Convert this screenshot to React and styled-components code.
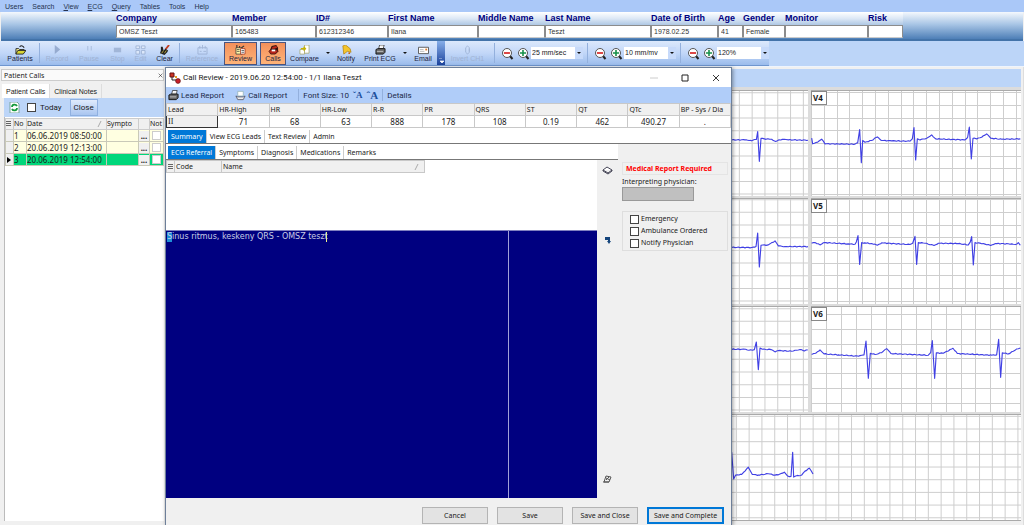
import styled, { createGlobalStyle } from 'styled-components';

const tahoma = '"Noto Sans", "Open Sans", sans-serif';
const segoe = 'Roboto, "Noto Sans", sans-serif';
const msSans = '"Liberation Sans", Arial, sans-serif';

const colors = {
  menu: '#aac8f8',
  strip: '#bcd5f8',
  navy: '#000080',
  face: '#f0f0f0',
  line: '#c8c8c8',
  highlight: '#0078d7',
  row: '#ffffe1',
  rowActive: '#00d77b',
};

const GlobalStyle = createGlobalStyle`
  * {
    box-sizing: border-box;
  }

  body {
    margin: 0;
    overflow: hidden;
    background: ${colors.face};
    font-family: ${tahoma};
    font-size: 8px;
    color: #1a1a1a;
  }

  button, input, select, textarea {
    font: inherit;
    color: inherit;
    margin: 0;
    padding: 0;
    border-radius: 0;
  }
`;

const Screen = styled.div`
  position: relative;
  display: flex;
  flex-direction: column;
  min-height: 100vh;
`;

/* Menu bar */

const MenuBar = styled.nav`
  display: flex;
  gap: 9px;
  height: 12px;
  padding: 0 5px;
  background: ${colors.menu};
  font-family: ${msSans};
  font-size: 7px;
  line-height: 13px;

  a {
    color: #26334f;
    text-decoration: none;
  }
`;

/* Patient header */

const PatientHeader = styled.section`
  display: grid;
  grid-template-columns: ${({ $columns }) => $columns};
  height: 29px;
  margin: 0 1px;
  border-bottom: 2px solid #4373a9;
  background: linear-gradient(#fff, #dbe7f5 25%, #7ba3d0 75%, #5384bb);
  font-family: ${msSans};
`;

const HeaderFill = styled.div`
  background: linear-gradient(#f4f8fd, #a9c6e6 45%, #4e7fb7);
`;

const PatientField = styled.label`
  display: flex;
  flex-direction: column;
  min-width: 0;
  color: ${colors.navy};
  font-size: 9px;
  font-weight: bold;
  line-height: 13px;
  white-space: nowrap;

  input {
    width: 100%;
    height: 13px;
    padding: 0 2px 1px;
    border: 1px solid #8c8c8c;
    border-bottom-color: #ccc;
    background: #fff;
    color: #333;
    font-size: 7px;
    font-weight: normal;
  }
`;

/* Main toolbar */

const ToolbarRow = styled.div`
  display: flex;
  height: 26px;
  border-bottom: 1px solid #eef4fd;
  background: ${colors.strip};
  font-family: ${msSans};
  font-size: 7px;
`;

const Toolbar = styled.div`
  display: flex;
  align-items: center;
  padding-left: ${({ $pad }) => $pad || 0}px;
  background: linear-gradient(#dce9fc, #c2d7f8 50%, #9bbcec);
  border-bottom: 1px solid #6f96cf;
`;

const ToolButton = styled.button`
  display: flex;
  flex-direction: column;
  align-items: center;
  justify-content: space-between;
  flex: none;
  width: ${({ $w }) => $w}px;
  height: 23px;
  padding: 2px 0 1px;
  border: 1px solid ${({ $on }) => ($on ? '#4b5580' : 'transparent')};
  background: ${({ $on }) => ($on ? 'linear-gradient(#f3905a, #ffb479)' : 'none')};
  color: ${({ disabled }) => (disabled ? '#9fb2d3' : '#1c2440')};
  line-height: 8px;
  white-space: nowrap;

  svg {
    width: 11px;
    height: 10px;
    opacity: ${({ disabled }) => (disabled ? 0.7 : 1)};
  }
`;

const Separator = styled.span`
  flex: none;
  width: 1px;
  height: ${({ $h }) => $h || 20}px;
  margin: 0 ${({ $gap }) => $gap || 0}px;
  background: #93b0dd;
`;

const ButtonGap = styled.span`
  width: 3px;
`;

const DropArrow = styled.button`
  width: 9px;
  border: 0;
  background: none;

  &::after {
    content: '';
    display: block;
    width: 0;
    margin: 0 auto;
    border: 2px solid transparent;
    border-top-color: #111;
    border-bottom: 0;
  }
`;

const OverflowHandle = styled.button`
  display: flex;
  align-items: flex-end;
  justify-content: center;
  width: 8px;
  height: 100%;
  padding-bottom: 2px;
  border: 0;
  background: linear-gradient(#86aee9, #1c439c);

  svg {
    width: 5px;
    height: 5px;
  }
`;

const ScaleGroup = styled.div`
  display: flex;
  align-items: center;
`;

const ZoomButton = styled.button`
  width: 16px;
  height: 14px;
  border: 0;
  background: none;

  svg {
    display: block;
    width: 13px;
    height: 13px;
    margin: auto;
  }
`;

const ScaleSelect = styled.span`
  display: flex;
  align-items: center;
  width: 52px;
  height: 12px;
  background: linear-gradient(90deg, #fff 44px, #c7dafa 44px);

  select {
    appearance: none;
    width: 43px;
    height: 12px;
    padding-left: 1px;
    border: 0;
    background: none;
    line-height: 12px;
  }
`;

/* Workspace */

const Workspace = styled.main`
  display: flex;
  flex: 1;
`;

const CallsPanel = styled.aside`
  display: flex;
  flex-direction: column;
  flex: none;
  width: 165px;
  padding: 2px 1px 4px;
  background: ${colors.face};
`;

const PanelTitle = styled.header`
  display: flex;
  align-items: center;
  justify-content: space-between;
  height: 12px;
  padding: 0 0 0 2px;
  border: 1px solid #ccc;
  background: #fafafa;
  font-size: 7px;

  button {
    border: 0;
    background: none;
  }

  svg {
    display: block;
    width: 5px;
    height: 5px;
  }
`;

const PanelTabs = styled.div`
  display: flex;
  height: 17px;
  padding: 3px 0 0 1px;
  font-family: ${msSans};
  font-size: 7px;
`;

const PanelTab = styled.button`
  padding: 0 4px;
  border: 0;
  border-right: 1px solid #ddd;
  background: ${({ $on }) => ($on ? '#fff' : 'none')};
`;

const PanelTools = styled.div`
  display: flex;
  align-items: center;
  height: 19px;
  margin-left: 3px;
  padding-left: 5px;
  background: ${colors.strip};
  font-family: ${segoe};

  & > svg {
    width: 11px;
    height: 11px;
    margin-right: 7px;
  }
`;

const CheckLabel = styled.label`
  display: flex;
  align-items: center;
  gap: ${({ $gap }) => $gap || 2}px;

  input {
    appearance: none;
    width: 9px;
    height: 9px;
    border: 1px solid #444;
    background: #fff;
  }
`;

const CloseCalls = styled.button`
  height: 17px;
  margin-left: 8px;
  padding: 0 3px;
  border: 1px solid #8fb0e0;
  background: linear-gradient(#e0ebfc, #a9c5f0);
`;

const CallsBody = styled.div`
  flex: 1;
  margin-left: 3px;
  padding-top: 1px;
  border-left: 1px solid #bbb;
  background: #fff;
  overflow: hidden;
`;

const CallsTable = styled.table`
  width: 100%;
  table-layout: fixed;
  border-collapse: collapse;
  line-height: 10px;

  th, td {
    height: 12px;
    padding: 0;
    border: 1px solid #c9c9b8;
    font-weight: normal;
    text-align: left;
    white-space: nowrap;
    overflow: hidden;
  }

  th {
    height: 11px;
    background: ${colors.face};
    border-color: #ccc;
    font-size: 7px;
  }

  th svg {
    display: block;
    width: 5px;
    height: 6px;
  }
`;

const SortHeader = styled.div`
  display: flex;
  align-items: center;
  justify-content: space-between;
  padding-right: 4px;
`;

const CallRow = styled.tr`
  background: ${({ $on }) => ($on ? colors.rowActive : colors.row)};

  td:first-child {
    background: ${colors.face};
  }

  svg {
    display: block;
    width: 4px;
    height: 6px;
    margin-left: 1px;
  }

  button {
    display: block;
    width: 10px;
    height: 10px;
    border: 0;
    background: ${colors.face};
    font-size: 8px;
    font-weight: bold;
    line-height: 5px;
  }

  input {
    appearance: none;
    display: block;
    width: 9px;
    height: 9px;
    margin-left: 2px;
    border: 1px solid #ccc;
    background: #fff;
  }
`;

/* ECG leads */

const EcgArea = styled.section`
  display: flex;
  flex-direction: column;
  flex: 1;
  padding: 2px 2px 4px 0;
  border-right: 1px solid #ddd;
`;

const EcgStrip = styled.div`
  height: 18px;
  background: ${colors.strip};
`;

const LeadGrid = styled.div`
  display: grid;
  flex: 1;
  grid-template-columns: minmax(0, 49fr) minmax(0, 16fr);
  grid-template-rows: repeat(4, minmax(0, 1fr));
  gap: 2px 3px;
  padding-top: 3px;
  border-bottom: 1px solid #aaa;
  background: #dcdcdc;
`;

const LeadCell = styled.figure`
  position: relative;
  grid-column: ${({ $wide }) => ($wide ? '1 / -1' : 'auto')};
  margin: 0;
  border-top: 1px solid #aaa;
  background: #fff;

  svg {
    position: absolute;
    inset: 0;
    width: 100%;
    height: 100%;
  }

  figcaption {
    position: absolute;
    top: 0;
    left: 0;
    width: 16px;
    height: 14px;
    padding-left: 1px;
    border: 1px solid #888;
    background: #fff;
    font-size: 8px;
    font-weight: bold;
    line-height: 12px;
  }
`;

/* Call review dialog */

const Dialog = styled.section`
  position: absolute;
  top: 67px;
  bottom: 0;
  left: 165px;
  display: flex;
  flex-direction: column;
  width: 567px;
  border: 1px solid #6d7f99;
  border-bottom: 0;
  background: ${colors.face};
  box-shadow: 1px 1px 4px rgba(0, 0, 0, 0.4);
`;

const TitleBar = styled.header`
  display: flex;
  align-items: center;
  height: 19px;
  padding: 0 11px 0 3px;
  background: #fff;
  font-family: ${segoe};

  & > svg {
    width: 12px;
    height: 12px;
  }

  h1 {
    flex: 1;
    margin: 0 0 0 2px;
    font-size: 8px;
    font-weight: normal;
  }
`;

const WindowButton = styled.button`
  margin-left: 23px;
  border: 0;
  background: none;

  svg {
    display: block;
    width: 8px;
    height: 8px;
  }
`;

const DialogTools = styled.div`
  display: flex;
  align-items: center;
  height: 16px;
  padding-left: 2px;
  background: #b0cdf9;
  color: #1c2a4a;
  font-family: ${segoe};
`;

const DialogTool = styled.button`
  display: flex;
  align-items: center;
  gap: 2px;
  margin-right: 11px;
  border: 0;
  background: none;

  svg {
    width: 11px;
    height: 11px;
  }
`;

const FontTools = styled.span`
  display: flex;
  align-items: center;
  gap: 4px;
  padding: 0 4px;
`;

const FontStep = styled.button`
  border: 0;
  background: none;
  color: #1d4f9c;
  font-family: "Liberation Serif", serif;
  font-size: ${({ $size }) => $size}px;
  font-weight: bold;
  line-height: 12px;
`;

const Measurements = styled.table`
  width: 100%;
  table-layout: fixed;
  border-collapse: collapse;
  background: #fff;
  line-height: 10px;

  th, td {
    height: 12px;
    padding: 0 1px;
    border: 1px solid ${colors.line};
    font-weight: normal;
    white-space: nowrap;
    overflow: hidden;
  }

  th {
    background: ${colors.face};
    font-size: 7px;
    text-align: left;
  }

  td {
    text-align: center;
  }

  td:first-child {
    border: 1px solid #333;
    background: ${colors.face};
    font-family: "Liberation Serif", serif;
    text-align: left;
  }
`;

const TabStrip = styled.div`
  display: flex;
  align-items: flex-end;
  height: 16px;
  margin-right: ${({ $right }) => $right || 0}px;
  padding-left: 2px;
  border-bottom: 1px solid #777;
  background: #fff;
`;

const Tab = styled.button`
  height: 13px;
  padding: 0 3px;
  border: 0;
  border-right: 1px solid ${({ $last }) => ($last ? 'transparent' : '#ccc')};
  background: ${({ $on }) => ($on ? colors.highlight : '#fff')};
  color: ${({ $on }) => ($on ? '#fff' : '#1a1a1a')};
  font-size: 7px;
`;

const DialogBody = styled.div`
  display: flex;
  flex: 1;
`;

const EditorColumn = styled.div`
  display: flex;
  flex-direction: column;
  flex: 1;
  background: #fff;
`;

const CodeTable = styled.table`
  width: 259px;
  height: 13px;
  margin-bottom: 57px;
  table-layout: fixed;
  border-collapse: collapse;
  background: ${colors.face};
  font-size: 7px;
  line-height: 10px;

  th {
    padding: 0 1px;
    border: 1px solid ${colors.line};
    font-weight: normal;
    text-align: left;
  }

  th svg {
    display: block;
    width: 5px;
    height: 6px;
  }
`;

const ReportText = styled.textarea`
  display: block;
  flex: 1;
  width: 100%;
  padding: 0 1px;
  border: 0;
  border-top: 1px solid #8080c0;
  outline: 0;
  resize: none;
  background:
    linear-gradient(#f4f48a, #f4f48a) 160px 1px / 1px 10px no-repeat,
    linear-gradient(#1e90d8, #1e90d8) 1px 1px / 5px 10px no-repeat,
    linear-gradient(#a0a0d8, #a0a0d8) right 88px top / 1px 100% no-repeat,
    ${colors.navy};
  color: #c8cce4;
  font-family: "DejaVu Sans", sans-serif;
  line-height: 12px;
`;

const IconColumn = styled.div`
  display: flex;
  flex-direction: column;
  width: 21px;
  padding: 5px 0 14px 5px;

  button {
    width: 11px;
    height: 10px;
    border: 0;
    background: none;
  }

  button:nth-child(2) {
    margin: 60px 0 auto;
  }

  svg {
    display: block;
    width: 11px;
    height: 10px;
  }
`;

const StatusColumn = styled.div`
  display: flex;
  flex-direction: column;
  width: 113px;
  padding: 2px 3px 0 4px;
  font-size: 7px;
`;

const Required = styled.p`
  margin: 0;
  padding-left: 3px;
  border: 1px solid #e4e4e4;
  color: #f00;
  font-weight: bold;
  line-height: 11px;
`;

const Physician = styled.label`
  display: flex;
  flex-direction: column;
  margin-top: 1px;
  line-height: 11px;

  input {
    width: 72px;
    height: 14px;
    border: 1px solid #999;
    background: #c0c0c0;
  }
`;

const Flags = styled.fieldset`
  display: flex;
  flex-direction: column;
  margin: 10px 0 0;
  padding: 1px 7px;
  border: 1px solid #dedede;
  line-height: 12px;
`;

const DialogFooter = styled.footer`
  display: flex;
  justify-content: flex-end;
  gap: 9px;
  height: 27px;
  padding: 9px 7px 0 0;
`;

const FooterButton = styled.button`
  width: ${({ $primary }) => ($primary ? 77 : 66)}px;
  height: 17px;
  border: ${({ $primary }) => ($primary ? `2px solid ${colors.highlight}` : '1px solid #b4b4b4')};
  background: #e3e3e3;
  font-size: 7px;
`;

/* Icons */

const FolderIcon = () => (
  <svg viewBox="0 0 12 11">
    <path d="M1 10V4h3l1 1h5v2" fill="#fff9a0" stroke="#222" />
    <path d="M1 10l2-4h9l-3 4z" fill="#d8d434" stroke="#222" />
    <path d="M5 2c2-2 4-1 5 1" fill="none" stroke="#222" strokeWidth="1.2" />
  </svg>
);
const PlayIcon = () => (
  <svg viewBox="0 0 12 11"><path d="M3 0l6 5-6 5z" fill="#8298c0" /></svg>
);
const PauseIcon = () => (
  <svg viewBox="0 0 12 11"><path d="M4 1v5M8 1v5" stroke="#a9bddd" strokeWidth="1.5" /></svg>
);
const StopIcon = () => (
  <svg viewBox="0 0 12 11"><path d="M2 3h8v5H2z" fill="#93a8cb" /></svg>
);
const GridIcon = () => (
  <svg viewBox="0 0 12 11">
    <path d="M1 1h4v3H1zM7 1h4v3H7zM1 6h4v4H1zM7 6h4v4H7z" fill="#e5eefb" stroke="#8fa4c8" />
  </svg>
);
const BrushIcon = () => (
  <svg viewBox="0 0 12 11">
    <path d="M11 0L7 5" stroke="#c33b1e" strokeWidth="2" />
    <path d="M2 2v4l-1 3 5 2 3-3 1-2-3-2-2 2-1-4z" fill="#222" />
    <path d="M3 9l2-3M6 9l2-3" stroke="#e7c93c" strokeWidth=".8" />
  </svg>
);
const ReferenceIcon = () => (
  <svg viewBox="0 0 12 11" fill="none" stroke="#8fa4c8">
    <path d="M1 3h10v7H1zM3 1v3M6 0v4M9 1v3M3 7h2M7 7h3" />
  </svg>
);
const ReviewIcon = () => (
  <svg viewBox="0 0 12 11">
    <path d="M1 3h7v7H1z" fill="#fff6a8" stroke="#333" strokeWidth=".8" />
    <path d="M2 3V0M5 3V1M7 3l3-2" stroke="#333" strokeWidth="1.2" />
    <path d="M6 4h5v6H6z" fill="#fff" stroke="#a02a12" strokeWidth=".8" />
    <path d="M2 5h3M2 7h3M7 6h3M7 8h3" stroke="#333" strokeWidth=".8" />
  </svg>
);
const PhoneIcon = () => (
  <svg viewBox="0 0 12 11">
    <path d="M2 6l2-5 5-1 2 3v4l-3 3H3z" fill="#30100c" />
    <path d="M4 4l1-2 4-1 1 2-3 1z" fill="#c02a1c" />
    <path d="M1 7l2-2 5 1 2-1 1 2-3 3H3z" fill="#b8241a" stroke="#30100c" strokeWidth=".8" />
    <path d="M4 5h4v2H4z" fill="#fff" />
  </svg>
);
const CompareIcon = () => (
  <svg viewBox="0 0 12 11">
    <path d="M6 0h5v9H6z" fill="#fff" stroke="#9a9a50" strokeWidth=".7" />
    <path d="M1 5h5v5H1z" fill="#fff" stroke="#9a9a50" strokeWidth=".7" />
    <path d="M2 4h5M5 2l2 2-2 2" fill="none" stroke="#c8b400" strokeWidth="1.5" />
  </svg>
);
const BellIcon = () => (
  <svg viewBox="0 0 12 11">
    <path d="M2 1l3-1 5 4 1 4-4-1-4 3z" fill="#f5c52b" stroke="#b38208" strokeWidth=".8" />
    <circle cx="9" cy="9" r="1" fill="#c45f10" />
  </svg>
);
const PrinterIcon = () => (
  <svg viewBox="0 0 12 11">
    <path d="M4 4l1-4h5L9 4z" fill="#fff" stroke="#222" strokeWidth=".8" />
    <path d="M1 5l2-1h8v4l-2 2H1z" fill="#666" stroke="#111" />
    <path d="M2 7h7M6 2h3" stroke="#ddd" strokeWidth=".8" />
  </svg>
);
const TrayIcon = () => (
  <svg viewBox="0 0 12 11">
    <path d="M3 1h6v5H3z" fill="#fff" stroke="#8aa" strokeWidth=".7" />
    <path d="M1 6l2 4h6l2-4-2 1H3z" fill="#eee" stroke="#445" strokeWidth=".8" />
  </svg>
);
const MailIcon = () => (
  <svg viewBox="0 0 12 11">
    <path d="M.5 2.5h11v7H.5z" fill="#fff" stroke="#555" />
    <path d="M2 5h4M2 7h5" stroke="#999" strokeWidth=".7" />
    <path d="M8 4h2v2H8z" fill="#e07b2a" />
  </svg>
);
const InvertIcon = () => (
  <svg viewBox="0 0 12 11" fill="none" stroke="#8fa4c8">
    <path d="M4 3l2-2 2 2v5l-2 2-2-2zM8 4v3" />
  </svg>
);
const LensIcon = ({ plus }) => (
  <svg viewBox="0 0 13 13">
    <path d="M8.5 8.5l3 3.5" stroke="#222" strokeWidth="2" />
    <circle cx="6" cy="6" r="4.5" fill="#fff" stroke="#555" />
    <path d={plus ? 'M3 6h6M6 3v6' : 'M3 6h6'} stroke={plus ? '#17904a' : '#d41a1a'} strokeWidth="1.6" />
  </svg>
);
const SortIcon = () => (
  <svg viewBox="0 0 5 6"><path d="M1 6l3-6" stroke="#999" strokeWidth=".8" /></svg>
);
const RowsIcon = () => (
  <svg viewBox="0 0 5 6"><path d="M0 .5h5M0 2.5h5M0 4.5h5" stroke="#555" strokeWidth=".9" /></svg>
);
const CrossIcon = () => (
  <svg viewBox="0 0 8 8"><path d="M1 1l6 6M7 1L1 7" stroke="#222" strokeWidth=".9" /></svg>
);

/* ECG traces, drawn at three units to the pixel */

const leads = [
  {
    box: [-1680, 15, 1929, 318],
    grid: [43, 20, 38.4],
    points: [[-20, 163], [60, 163], [72, 165], [80, 166], [88, 162], [94, 162], [98, 138], [103, 228], [108, 158],
      [118, 160], [140, 161], [152, 168], [162, 163], [178, 161], [190, 163], [250, 164]],
  },
  {
    label: 'V4',
    box: [258, 15, 630, 318],
    grid: [298, 20, 38.4],
    points: [[260, 158], [263, 175], [278, 170], [290, 161], [300, 175], [390, 176], [398, 172], [404, 132],
      [409, 232], [413, 165], [420, 170], [440, 165], [457, 154], [470, 165], [500, 166], [555, 167], [562, 160],
      [567, 126], [572, 224], [577, 160], [585, 163], [605, 158], [620, 148], [632, 160], [720, 163], [728, 155],
      [733, 124], [739, 221], [744, 158], [755, 160], [770, 155], [785, 145], [797, 158], [830, 161], [886, 160]],
  },
  {
    box: [-1680, 342, 1929, 318],
    grid: [43, 344, 38.4],
    points: [[-20, 488], [80, 489], [93, 486], [98, 445], [103, 548], [108, 482], [130, 481], [150, 469],
      [160, 484], [180, 486], [250, 486]],
  },
  {
    label: 'V5',
    box: [258, 342, 630, 318],
    grid: [298, 344, 38.4],
    points: [[260, 476], [270, 474], [285, 481], [298, 474], [370, 478], [390, 479], [394, 472], [399, 453],
      [404, 540], [410, 474], [418, 475], [440, 477], [457, 482], [470, 475], [555, 480], [563, 476], [570, 455],
      [575, 540], [580, 474], [600, 476], [627, 483], [640, 476], [700, 477], [730, 481], [736, 472], [740, 456],
      [745, 542], [750, 474], [775, 477], [797, 483], [810, 477], [860, 478], [872, 480], [880, 474], [886, 482]],
  },
  {
    box: [-1680, 18, 1929, 318],
    grid: [43, 23, 38.4],
    points: [[-20, 146], [62, 146], [72, 149], [88, 147], [94, 124], [100, 208], [105, 142], [112, 146],
      [138, 147], [150, 154], [160, 150], [200, 152], [215, 149], [228, 147], [238, 151], [248, 148]],
  },
  {
    label: 'V6',
    box: [258, 18, 630, 318],
    grid: [305, 41, 44.8],
    points: [[260, 162], [272, 158], [285, 148], [297, 160], [340, 163], [400, 167], [417, 163], [423, 121],
      [430, 234], [436, 158], [450, 162], [470, 156], [485, 144], [498, 159], [610, 164], [617, 156], [622, 120],
      [629, 234], [634, 157], [655, 158], [684, 143], [697, 159], [800, 164], [815, 163], [821, 116], [827, 231],
      [832, 157], [850, 160], [865, 152], [875, 145], [886, 142]],
  },
  {
    wide: true,
    box: [-1680, 342, 2568, 318],
    grid: [34, 346, 38.4],
    points: [[-20, 524], [10, 524], [20, 455], [26, 536], [32, 524], [50, 522], [60, 512], [70, 500], [82, 522],
      [100, 524], [130, 520], [150, 524], [165, 521], [178, 515], [188, 527], [198, 528], [203, 455], [206, 530],
      [212, 527], [230, 524], [240, 512], [253, 503], [264, 521]],
  },
];

// adds a little muscle noise to the slow parts of the trace
const tracePath = (points) => {
  const out = [];
  points.forEach(([x, y], i) => {
    out.push(`${x} ${y}`);
    const next = points[i + 1];
    if (!next || Math.abs(next[1] - y) > 18) return;
    for (let nx = x + 5; nx < next[0] - 2; nx += 5) {
      const mid = y + ((next[1] - y) * (nx - x)) / (next[0] - x);
      out.push(`${nx} ${(mid + Math.sin(nx * 1.7) * 1.2).toFixed(1)}`);
    }
  });
  return `M${out.join('L')}`;
};

const gridPath = ([left, top, width, height], [x0, y0, step]) => {
  let d = '';
  for (let x = x0 - Math.floor((x0 - left) / step) * step; x < left + width; x += step) d += `M${x} ${top}v${height}`;
  for (let y = y0 - Math.floor((y0 - top) / step) * step; y < top + height; y += step) d += `M${left} ${y}h${width}`;
  return d;
};

const Lead = ({ label, box, grid, points, wide }) => (
  <LeadCell $wide={wide}>
    <svg viewBox={box.join(' ')} preserveAspectRatio="none">
      <path d={gridPath(box, grid)} stroke="#cecece" strokeWidth="3" shapeRendering="crispEdges" />
      <path d={tracePath(points)} fill="none" stroke="#4040e4" strokeWidth="3.4" strokeLinejoin="round" />
    </svg>
    {label && <figcaption>{label}</figcaption>}
  </LeadCell>
);

/* Data */

const menus = [['U', 'sers'], ['S', 'earch'], ['V', 'iew'], ['E', 'CG'], ['Q', 'uery'], ['T', 'ables'], ['T', 'ools'], ['H', 'elp']];
const underlined = ['V', 'E', 'Q'];

const patient = [
  ['Company', 'OMSZ Teszt', 116],
  ['Member', '165483', 84],
  ['ID#', '612312346', 72],
  ['First Name', 'Ilana', 90],
  ['Middle Name', '', 67],
  ['Last Name', 'Teszt', 106],
  ['Date of Birth', '1978.02.25', 67],
  ['Age', '41', 25],
  ['Gender', 'Female', 42],
  ['Monitor', '', 83],
  ['Risk', '', 35],
];
const patientColumns = `115fr ${patient.map((f) => `minmax(0, ${f[2]}fr)`).join(' ')} 120fr`;

const scales = ['25 mm/sec', '10 mm/mv', '120%'];

const calls = [
  ['1', '06.06.2019 08:50:00'],
  ['2', '20.06.2019 12:13:00'],
  ['3', '20.06.2019 12:54:00'],
];

const measurements = [
  ['Lead', 'II'],
  ['HR-High', '71'],
  ['HR', '68'],
  ['HR-Low', '63'],
  ['R-R', '888'],
  ['PR', '178'],
  ['QRS', '108'],
  ['ST', '0.19'],
  ['QT', '462'],
  ['QTc', '490.27'],
  ['BP - Sys / Dia', '.'],
];

const MainToolbar = () => (
  <ToolbarRow>
    <Toolbar $pad={1}>
      <ToolButton $w={38}><FolderIcon />Patients</ToolButton>
      <Separator />
      <ToolButton $w={34} disabled><PlayIcon />Record</ToolButton>
      <ToolButton $w={30} disabled><PauseIcon />Pause</ToolButton>
      <ToolButton $w={27} disabled><StopIcon />Stop</ToolButton>
      <ToolButton $w={19} disabled><GridIcon />Edit</ToolButton>
      <ToolButton $w={29}><BrushIcon />Clear</ToolButton>
      <Separator />
      <ToolButton $w={44} disabled><ReferenceIcon />Reference</ToolButton>
      <ToolButton $w={33} $on><ReviewIcon />Review</ToolButton>
      <ButtonGap />
      <ToolButton $w={26} $on><PhoneIcon />Calls</ToolButton>
      <ToolButton $w={37}><CompareIcon />Compare</ToolButton>
      <DropArrow aria-label="Compare options" />
      <ToolButton $w={28}><BellIcon />Notify</ToolButton>
      <ToolButton $w={40}><PrinterIcon />Print ECG</ToolButton>
      <DropArrow aria-label="Print options" />
      <ToolButton $w={28}><MailIcon />Email</ToolButton>
      <OverflowHandle aria-label="More buttons">
        <svg viewBox="0 0 5 5"><path d="M0 0h3M1 3h4L3 5z" fill="#fff" stroke="#fff" strokeWidth=".7" /></svg>
      </OverflowHandle>
    </Toolbar>
    <Toolbar>
      <ToolButton $w={45} disabled><InvertIcon />Invert CH1</ToolButton>
      {scales.map((scale) => (
        <ScaleGroup key={scale}>
          <Separator $gap={4} />
          <ZoomButton aria-label="Zoom out"><LensIcon /></ZoomButton>
          <ZoomButton aria-label="Zoom in"><LensIcon plus /></ZoomButton>
          <ScaleSelect>
            <select aria-label="Scale" defaultValue={scale}>
              <option>{scale}</option>
            </select>
            <DropArrow as="span" />
          </ScaleSelect>
        </ScaleGroup>
      ))}
    </Toolbar>
  </ToolbarRow>
);

const PatientCalls = () => (
  <CallsPanel>
    <PanelTitle>
      Patient Calls
      <button aria-label="Close panel"><CrossIcon /></button>
    </PanelTitle>
    <PanelTabs>
      <PanelTab $on>Patient Calls</PanelTab>
      <PanelTab>Clinical Notes</PanelTab>
    </PanelTabs>
    <PanelTools>
      <svg viewBox="0 0 11 11">
        <path d="M1 0h7l2 2v9H1z" fill="#fff" stroke="#7ba6a0" />
        <path d="M3 5c0-3 4-3 5-1M8 6c0 3-4 3-5 1" fill="none" stroke="#159a3c" strokeWidth="1.8" />
      </svg>
      <CheckLabel $gap={4}><input type="checkbox" />Today</CheckLabel>
      <CloseCalls>Close</CloseCalls>
    </PanelTools>
    <CallsBody>
      <CallsTable>
        <colgroup>
          <col width="8" />
          <col width="13" />
          <col width="80" />
          <col width="32" />
          <col width="11" />
          <col />
        </colgroup>
        <thead>
          <tr>
            <th><RowsIcon /></th>
            <th>No</th>
            <th><SortHeader>Date<SortIcon /></SortHeader></th>
            <th>Sympto</th>
            <th />
            <th>Not</th>
          </tr>
        </thead>
        <tbody>
          {calls.map(([no, date]) => (
            <CallRow key={no} $on={no === '3'}>
              <td>{no === '3' && <svg viewBox="0 0 4 6"><path d="M0 0l4 3-4 3z" /></svg>}</td>
              <td>{no}</td>
              <td>{date}</td>
              <td />
              <td><button>...</button></td>
              <td><input type="checkbox" aria-label={`Notes ${no}`} /></td>
            </CallRow>
          ))}
        </tbody>
      </CallsTable>
    </CallsBody>
  </CallsPanel>
);

const CallReview = () => (
  <Dialog role="dialog">
    <TitleBar>
      <svg viewBox="0 0 12 12">
        <path d="M1 1h4v4H1z" fill="#c32" stroke="#611" />
        <path d="M3 5v3h4" fill="none" stroke="#222" />
        <path d="M6 4h2v2H6z" fill="#e8a020" />
        <circle cx="9" cy="9" r="2.4" fill="#c8202a" stroke="#611" strokeWidth=".7" />
      </svg>
      <h1>Call Review - 2019.06.20 12:54:00 - 1/1 Ilana Teszt</h1>
      <WindowButton aria-label="Minimize">
        <svg viewBox="0 0 8 8"><path d="M0 4h8" stroke="#ccc" /></svg>
      </WindowButton>
      <WindowButton aria-label="Maximize">
        <svg viewBox="0 0 8 8"><path d="M1 1h6v6H1z" fill="none" stroke="#222" /></svg>
      </WindowButton>
      <WindowButton aria-label="Close"><CrossIcon /></WindowButton>
    </TitleBar>
    <DialogTools>
      <DialogTool><PrinterIcon />Lead Report</DialogTool>
      <DialogTool><TrayIcon />Call Report</DialogTool>
      <Separator $h={12} />
      <FontTools>
        Font Size: 10
        <FontStep $size={9} aria-label="Smaller font">ˇA</FontStep>
        <FontStep $size={11} aria-label="Larger font">ˆA</FontStep>
      </FontTools>
      <Separator $h={12} />
      <FontTools as={DialogTool}>Details</FontTools>
    </DialogTools>
    <Measurements>
      <thead>
        <tr>{measurements.map(([name]) => <th key={name}>{name}</th>)}</tr>
      </thead>
      <tbody>
        <tr>{measurements.map(([name, value]) => <td key={name}>{value}</td>)}</tr>
      </tbody>
    </Measurements>
    <TabStrip>
      <Tab $on>Summary</Tab>
      <Tab>View ECG Leads</Tab>
      <Tab>Text Review</Tab>
      <Tab $last>Admin</Tab>
    </TabStrip>
    <TabStrip $right={113}>
      <Tab $on>ECG Referral</Tab>
      <Tab>Symptoms</Tab>
      <Tab>Diagnosis</Tab>
      <Tab>Medications</Tab>
      <Tab $last>Remarks</Tab>
    </TabStrip>
    <DialogBody>
      <EditorColumn>
        <CodeTable>
          <colgroup>
            <col width="8" />
            <col width="47" />
            <col />
          </colgroup>
          <thead>
            <tr>
              <th><RowsIcon /></th>
              <th>Code</th>
              <th><SortHeader>Name<SortIcon /></SortHeader></th>
            </tr>
          </thead>
        </CodeTable>
        <ReportText aria-label="Report" spellCheck={false} defaultValue="Sinus ritmus, keskeny QRS - OMSZ teszt" />
      </EditorColumn>
      <IconColumn>
        <button aria-label="Code book">
          <svg viewBox="0 0 11 10"><path d="M1 5l4-3 5 3-4 3zM1 5v1l5 3 4-3V5" fill="#fff" stroke="#445" /></svg>
        </button>
        <button aria-label="Insert">
          <svg viewBox="0 0 11 10"><path d="M3 2h5v4h1L7 9 5 6h1V5H3z" fill="#15457c" /></svg>
        </button>
        <button aria-label="Edit text">
          <svg viewBox="0 0 11 10"><path d="M2 8l2-6 5 1-2 5zM4 4l4 2M4 6l3-3M1 8h6" fill="none" stroke="#555" /></svg>
        </button>
      </IconColumn>
      <StatusColumn>
        <Required>Medical Report Required</Required>
        <Physician>
          Interpreting physician:
          <input readOnly />
        </Physician>
        <Flags>
          <CheckLabel><input type="checkbox" />Emergency</CheckLabel>
          <CheckLabel><input type="checkbox" />Ambulance Ordered</CheckLabel>
          <CheckLabel><input type="checkbox" />Notify Physician</CheckLabel>
        </Flags>
      </StatusColumn>
    </DialogBody>
    <DialogFooter>
      <FooterButton>Cancel</FooterButton>
      <FooterButton>Save</FooterButton>
      <FooterButton>Save and Close</FooterButton>
      <FooterButton $primary>Save and Complete</FooterButton>
    </DialogFooter>
  </Dialog>
);

const App = () => {
  return (
    <Screen>
      <GlobalStyle />
      <MenuBar>
        {menus.map(([key, rest]) => (
          <a href="#menu" key={key + rest}>{underlined.includes(key) ? <u>{key}</u> : key}{rest}</a>
        ))}
      </MenuBar>
      <PatientHeader $columns={patientColumns}>
        <HeaderFill />
        {patient.map(([label, value]) => (
          <PatientField key={label}>
            {label}
            <input defaultValue={value} />
          </PatientField>
        ))}
        <HeaderFill />
      </PatientHeader>
      <MainToolbar />
      <Workspace>
        <PatientCalls />
        <EcgArea>
          <EcgStrip />
          <LeadGrid>
            {leads.map((lead, i) => <Lead key={i} {...lead} />)}
          </LeadGrid>
        </EcgArea>
      </Workspace>
      <CallReview />
    </Screen>
  )
}

export default App
